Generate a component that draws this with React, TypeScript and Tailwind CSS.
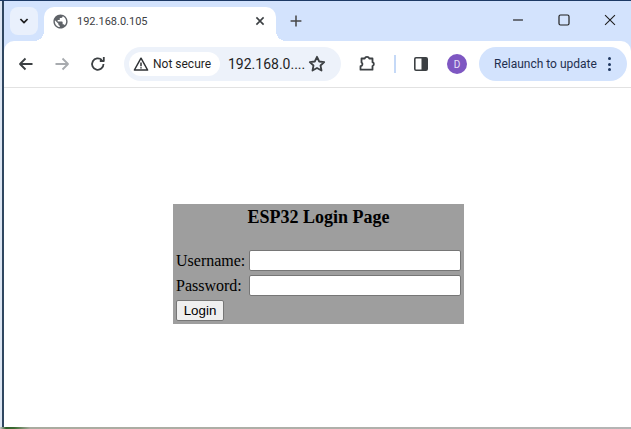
import React from "react";

const ui = "font-['Roboto','Noto_Sans',sans-serif]";

function Globe() {
  return (
    <svg width="17" height="17" viewBox="0 0 24 24" fill="#5f6368">
      <path d="M12 2C6.480 2 2 6.480 2 12s4.480 10 10 10 10-4.480 10-10S17.520 2 12 2zm-1 17.930c-3.950-.49-7-3.850-7-7.930 0-.62.08-1.210.21-1.790L9 15v1c0 1.100.9 2 2 2v1.930zm6.900-2.540c-.26-.81-1-1.390-1.900-1.390h-1v-3c0-.55-.45-1-1-1H8v-2h2c.55 0 1-.45 1-1V7h2c1.100 0 2-.9 2-2v-.41c2.930 1.190 5 4.060 5 7.410 0 2.080-.8 3.970-2.100 5.390z" />
    </svg>
  );
}

function Warn() {
  return (
    <svg width="16" height="16" viewBox="0 0 16 16" fill="none" stroke="#2f3235" strokeWidth="1.500" strokeLinejoin="round">
      <path d="M8 2.200 14.600 14H1.400z" />
      <path d="M8 6.500v3.800M8 11.200v1.200" />
    </svg>
  );
}

function Icon({ d, w = 20, color = "#3c4043", sw = 1.8 }: { d: string; w?: number; color?: string; sw?: number }) {
  return (
    <svg width={w} height={w} viewBox="0 0 20 20" fill="none" stroke={color} strokeWidth={sw} strokeLinejoin="round" strokeLinecap="butt">
      <path d={d} />
    </svg>
  );
}

export default function App() {
  return (
    <div className="w-[631px] h-[429px] flex flex-col overflow-hidden bg-white">
      <div className="h-px bg-[#1d3a66] shrink-0" />
      <div className="flex-1 flex min-h-0">
        <div className="w-[2px] bg-[#dde6f3] shrink-0" />
        <div className="w-[2px] bg-[#2f4660] shrink-0" />
        <div className="flex-1 flex flex-col min-w-0 bg-[#d3e3fd]">
          {/* tab strip */}
          <div className={`h-10 flex items-end shrink-0 ${ui}`}>
            <div className="w-[40px] h-[34px] pl-[6px] self-start mt-[6px]">
              <div className="w-7 h-7 rounded-lg bg-[#e9f0fc] flex items-center justify-center">
                <Icon d="M5.500 7.500 10 12l4.500-4.500" w={16} color="#1f1f1f" sw={2.200} />
              </div>
            </div>
            <div className="relative w-[232px] h-[34px] bg-white rounded-t-[10px] flex items-center pl-[8px] pr-[8px] pb-[6px]">
              <span className="absolute -left-[10px] bottom-0 w-[10px] h-[10px] bg-[radial-gradient(circle_at_0_0,transparent_10px,white_10px)]" />
              <span className="absolute -right-[10px] bottom-0 w-[10px] h-[10px] bg-[radial-gradient(circle_at_100%_0,transparent_10px,white_10px)]" />
              <Globe />
              <span className="ml-[8px] text-[11px] text-[#3c4043] flex-1 leading-none">192.168.0.105</span>
              <Icon d="M5.500 5.500l9 9M14.500 5.500l-9 9" w={16} color="#3c4043" sw={2} />
            </div>
            <div className="w-10 h-[34px] flex items-center justify-center pb-[6px]">
              <Icon d="M10 4v12M4 10h12" w={18} color="#474747" sw={1.700} />
            </div>
            <div className="flex-1" />
            <div className="flex h-[40px] items-center pb-[2px]">
              <div className="w-[46px] flex justify-center"><Icon d="M4.500 10h11" w={18} color="#1f1f1f" sw={1.300} /></div>
              <div className="w-[46px] flex justify-center">
                <svg width="18" height="18" viewBox="0 0 18 18" fill="none" stroke="#1f1f1f" strokeWidth="1.200"><rect x="4" y="4" width="10" height="10" rx="1.500" /></svg>
              </div>
              <div className="w-[44px] pl-[2px] flex justify-center"><Icon d="M4.500 4.500l11 11M15.500 4.500l-11 11" w={18} color="#1f1f1f" sw={1.200} /></div>
            </div>
          </div>
          {/* toolbar */}
          <div className={`h-[47px] border-b border-[#e2e2e2] bg-white rounded-t-[10px] flex items-center shrink-0 ${ui}`}>
            <div className="w-[120px] flex items-center pl-[12px] gap-[16px]">
              <Icon d="M16.500 10H4M9.500 4.500 4 10l5.500 5.500" />
              <Icon d="M3.500 10H16M10.500 4.500 16 10l-5.500 5.500" color="#a8abaf" />
              <Icon d="M15.500 10a5.700 5.700 0 1 1-1.700-4M15.800 3v4h-4" />
            </div>
            <div className="w-[217px] h-[34px] rounded-full bg-[#edf2fa] flex items-center pl-[5px] relative">
              <div className="w-[91px] h-6 rounded-full bg-white flex items-center pl-[4px]">
                <Warn />
                <span className="ml-[4px] text-[12px] text-[#1f1f1f] leading-none whitespace-nowrap">Not secure</span>
              </div>
              <span className="ml-[8px] text-[14px] text-[#1f1f1f] leading-none whitespace-nowrap">192.168.0....</span>
              <div className="absolute left-[183px] top-[7px]">
                <Icon d="M10 2.800l2.200 4.700 5 .6-3.700 3.400 1 5-4.500-2.500-4.500 2.500 1-5L2.800 8.100l5-.6z" sw={1.800} />
              </div>
            </div>
            <div className="w-[36px] flex justify-end">
              <Icon d="M4.500 4.500h3.200a2.400 2.400 0 0 1 4.600 0h3.200v3.700a2 2 0 0 1 0 3.800v3.700H3.500v-3.500a2 2 0 0 0 1-3.700z" w={20} sw={1.800} />
            </div>
            <div className="w-[1.500px] h-[18px] bg-[#c5d9f7] ml-[17px]" />
            <div className="ml-[15.500px]">
              <svg width="20" height="20" viewBox="0 0 20 20"><rect x="3.800" y="3.800" width="12.400" height="12.400" rx="1.200" fill="#fff" stroke="#3c4043" strokeWidth="1.600" /><rect x="10.500" y="4" width="5.500" height="12" fill="#3c4043" /></svg>
            </div>
            <div className="ml-[16px] w-5 h-5 rounded-full bg-[#7e57c2] text-[#e8e0f6] text-[10px] flex items-center justify-center">D</div>
            <div className="ml-[12px] w-[148px] h-[34px] rounded-full bg-[#d3e3fd] flex items-center pl-[15px] text-[12px] text-[#1f2f4f]">
              <span className="flex-1 leading-none whitespace-nowrap">Relaunch to update</span>
              <div className="flex flex-col gap-[2.500px] mr-[16.500px]">
                <span className="w-[3px] h-[3px] rounded-full bg-[#1f3760]" />
                <span className="w-[3px] h-[3px] rounded-full bg-[#1f3760]" />
                <span className="w-[3px] h-[3px] rounded-full bg-[#1f3760]" />
              </div>
            </div>
          </div>
          {/* page */}
          <div className="flex-1 bg-white pt-[116px] pl-[169px] font-['Liberation_Serif',serif] text-black">
            <div className="w-[291px] h-[120px] bg-[#9e9e9e] pl-[3px] pt-[3px]">
              <h3 className="text-[18px] font-bold text-center leading-[20px] h-[41px] pr-[3px]">ESP32 Login Page</h3>
              <div className="flex items-center h-[25px]">
                <span className="w-[73px] text-base leading-none">Username:</span>
                <input className="w-[212px] h-[21px] bg-white border border-[#767676] rounded-[2px]" />
              </div>
              <div className="flex items-center h-[25px]">
                <span className="w-[73px] text-base leading-none">Password:</span>
                <input type="password" className="w-[212px] h-[21px] bg-white border border-[#767676] rounded-[2px]" />
              </div>
              <button className="mt-[2px] w-12 h-[21px] bg-[#efefef] border border-[#767676] rounded-[2px] text-[13.330px] leading-none font-['Liberation_Sans',sans-serif] text-black">Login</button>
            </div>
          </div>
        </div>
      </div>
      <div className="h-[2px] shrink-0 bg-[linear-gradient(to_right,#c8c8c8_0px,#2f5d2a_6px,#3a6a30_14px,#a9ab9f_30px,#b5b5b5_100%)]" />
    </div>
  );
}
